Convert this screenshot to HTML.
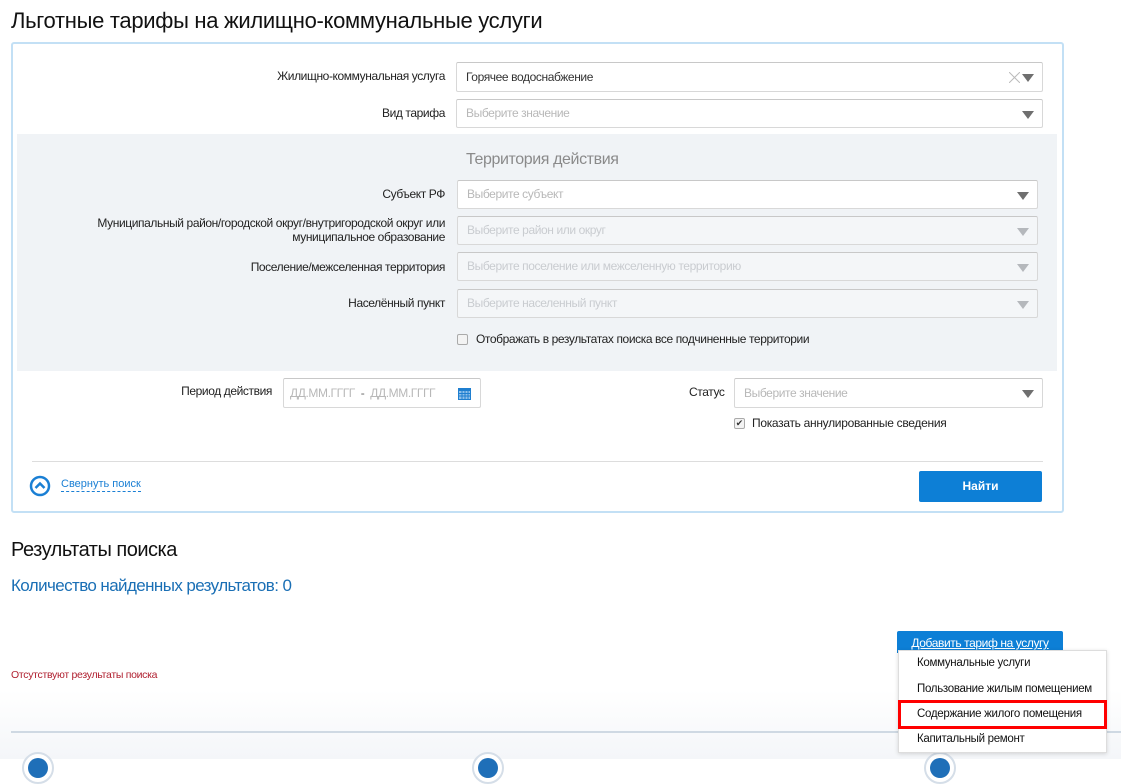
<!DOCTYPE html>
<html><head><meta charset="utf-8"><style>
*{box-sizing:border-box;margin:0;padding:0}
body{width:1121px;height:759px;overflow:hidden;position:relative;background:#fff;font-family:"Liberation Sans",sans-serif;color:#222}
.a{position:absolute;white-space:nowrap}
.lbl{position:absolute;font-size:12px;text-align:right;letter-spacing:-0.4px;color:#222}
.inp{position:absolute;border:1px solid #d8d8d8;border-top-color:#c8c8c8;border-radius:2px;background:#fff;font-size:12px;color:#b8b8b8;padding-left:9px;letter-spacing:-0.4px}
.inp.d{background:#f4f6f8;color:#c9ccd0}
.tri{position:absolute;right:8px;top:11px;width:0;height:0;border-left:6px solid transparent;border-right:6px solid transparent;border-top:8px solid #6f6f6f}
.d .tri{border-top-color:#b5b8bc}
.cb{position:absolute;width:11px;height:11px;border:1px solid #aaa;border-radius:2px;background:#f3f3f3}
</style></head><body>
<div class="a" style="left:11px;top:8px;font-size:22px;letter-spacing:-0.3px;color:#111">Льготные тарифы на жилищно-коммунальные услуги</div>
<div class="a" style="left:11px;top:42px;width:1053px;height:471px;border:2px solid #c3e0f5;border-radius:3px"></div>

<div class="lbl" style="right:676px;top:69px">Жилищно-коммунальная услуга</div>
<div class="inp" style="left:456px;top:62px;width:587px;height:30px;line-height:28px;color:#333">Горячее водоснабжение
 <svg style="position:absolute;right:22px;top:9px" width="11" height="11"><path d="M0 0L11 11M11 0L0 11" stroke="#bbb" stroke-width="1"/></svg><div class="tri"></div></div>
<div class="lbl" style="right:676px;top:106px">Вид тарифа</div>
<div class="inp" style="left:456px;top:99px;width:587px;height:29px;line-height:27px">Выберите значение<div class="tri"></div></div>

<div class="a" style="left:17px;top:134px;width:1040px;height:237px;background:#f0f3f6"></div>
<div class="a" style="left:466px;top:151px;font-size:16px;color:#8a8a8a;letter-spacing:-0.4px">Территория действия</div>
<div class="lbl" style="right:676px;top:187px">Субъект РФ</div>
<div class="inp" style="left:457px;top:180px;width:581px;height:29px;line-height:27px">Выберите субъект<div class="tri"></div></div>
<div class="lbl" style="right:676px;top:216px;line-height:14px">Муниципальный район/городской округ/внутригородской округ или<br>муниципальное образование</div>
<div class="inp d" style="left:457px;top:216px;width:581px;height:29px;line-height:27px">Выберите район или округ<div class="tri"></div></div>
<div class="lbl" style="right:676px;top:260px">Поселение/межселенная территория</div>
<div class="inp d" style="left:457px;top:252px;width:581px;height:29px;line-height:27px">Выберите поселение или межселенную территорию<div class="tri"></div></div>
<div class="lbl" style="right:676px;top:296px">Населённый пункт</div>
<div class="inp d" style="left:457px;top:289px;width:581px;height:29px;line-height:27px">Выберите населенный пункт<div class="tri"></div></div>
<div class="cb" style="left:457px;top:334px"></div>
<div class="a" style="left:476px;top:332px;font-size:12px;letter-spacing:-0.4px">Отображать в результатах поиска все подчиненные территории</div>

<div class="lbl" style="right:849px;top:384px">Период действия</div>
<div class="inp" style="left:283px;top:378px;width:198px;height:30px;line-height:28px;padding-left:6px">ДД.ММ.ГГГГ <span style="color:#666">&nbsp;-&nbsp;</span> ДД.ММ.ГГГГ
<svg style="position:absolute;left:174px;top:8px" width="13" height="13" viewBox="0 0 13 13"><rect x="0" y="1" width="13" height="12" fill="#1f7fd0"/><rect x="1" y="4" width="11" height="8" fill="#8fc0ea"/><path d="M1 6.5h11M1 9h11M4 4v8M7 4v8M10 4v8" stroke="#1f7fd0" stroke-width="1"/></svg></div>
<div class="lbl" style="left:689px;top:385px">Статус</div>
<div class="inp" style="left:734px;top:378px;width:309px;height:30px;line-height:28px">Выберите значение<div class="tri"></div></div>
<div class="cb" style="left:734px;top:418px;font-size:9px;line-height:9px;color:#333;text-align:center">✔</div>
<div class="a" style="left:752px;top:416px;font-size:12px;letter-spacing:-0.3px">Показать аннулированные сведения</div>

<div class="a" style="left:32px;top:461px;width:1011px;height:1px;background:#ddd"></div>
<svg class="a" style="left:29px;top:475px" width="22" height="22" viewBox="0 0 22 22"><circle cx="11" cy="11" r="9" fill="none" stroke="#1a7fd4" stroke-width="2.5"/><path d="M6.5 13l4.5-4.5 4.5 4.5" fill="none" stroke="#1a7fd4" stroke-width="2.5"/></svg>
<div class="a" style="left:61px;top:478px;font-size:11px;color:#1a7fd4;border-bottom:1px dashed #1a7fd4;padding-bottom:1px">Свернуть поиск</div>
<div class="a" style="left:919px;top:471px;width:123px;height:31px;background:#0d7fd6;border-radius:2px;color:#fff;font-weight:bold;font-size:12px;text-align:center;line-height:31px">Найти</div>

<div class="a" style="left:11px;top:539px;font-size:20px;color:#111;letter-spacing:-0.5px">Результаты поиска</div>
<div class="a" style="left:11px;top:576px;font-size:17px;color:#1a6fb5;letter-spacing:-0.6px">Количество найденных результатов: 0</div>
<div class="a" style="left:11px;top:669px;font-size:10.5px;color:#b02030;letter-spacing:-0.3px">Отсутствуют результаты поиска</div>

<div class="a" style="left:0;top:690px;width:1121px;height:69px;background:linear-gradient(#fff,#f4f6f9)"></div>
<div class="a" style="left:11px;top:731px;width:1110px;height:2px;background:#cfd9e3"></div>
<div class="a" style="left:22px;top:752px;width:32px;height:32px;border-radius:50%;background:#fff;border:2px solid #d5dee8"><div style="margin:4px auto;width:20px;height:20px;border-radius:50%;background:#1f6fb8"></div></div>
<div class="a" style="left:472px;top:752px;width:32px;height:32px;border-radius:50%;background:#fff;border:2px solid #d5dee8"><div style="margin:4px auto;width:20px;height:20px;border-radius:50%;background:#1f6fb8"></div></div>
<div class="a" style="left:924px;top:752px;width:32px;height:32px;border-radius:50%;background:#fff;border:2px solid #d5dee8"><div style="margin:4px auto;width:20px;height:20px;border-radius:50%;background:#1f6fb8"></div></div>

<div class="a" style="left:897px;top:631px;width:166px;height:22px;background:#0d7fd6;border-radius:2px 2px 0 0;color:#fff;font-size:12px;text-align:center;line-height:25px;letter-spacing:-0.4px"><span style="text-decoration:underline">Добавить тариф на услугу</span></div>
<div class="a" style="left:898px;top:650px;width:209px;height:103px;background:#fff;border:1px solid #ddd;box-shadow:0 1px 4px rgba(0,0,0,.15);font-size:11.5px;letter-spacing:-0.3px;color:#111">
<div class="a" style="left:18px;top:6px">Коммунальные услуги</div>
<div class="a" style="left:18px;top:32px">Пользование жилым помещением</div>
<div class="a" style="left:-1px;top:49px;width:209px;height:29px;border:3px solid #f00"></div>
<div class="a" style="left:18px;top:57px">Содержание жилого помещения</div>
<div class="a" style="left:18px;top:82px">Капитальный ремонт</div>
</div>
</body></html>
